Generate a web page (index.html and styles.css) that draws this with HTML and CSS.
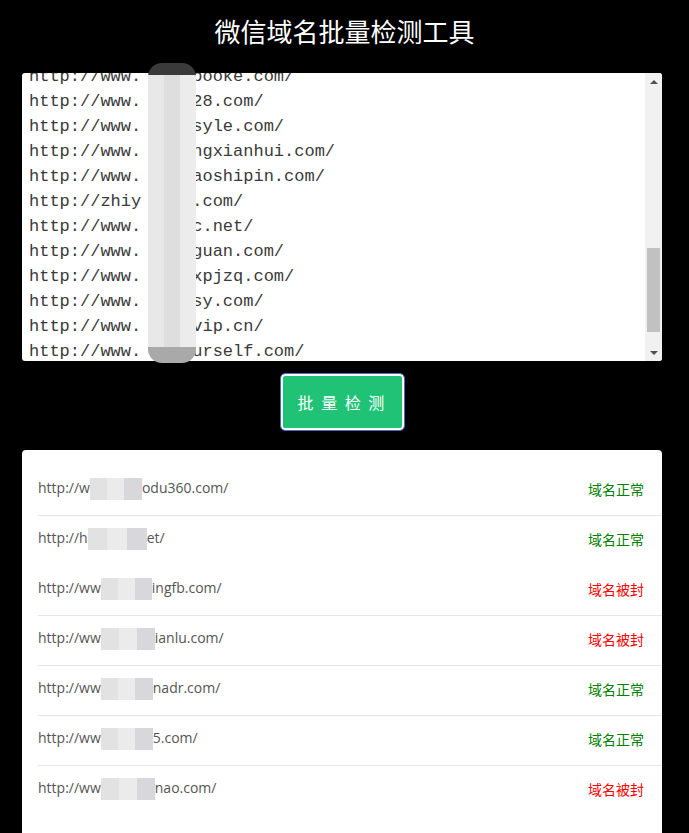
FILE: index.html
```html
<!DOCTYPE html>
<html lang="zh-CN">
<head>
    <meta charset="UTF-8">
    <title>微信域名批量检测工具</title>
    <link rel="stylesheet" href="styles.css">
</head>
<body>
    <h2 class="title">微信域名批量检测工具</h2>
    <div class="box">
        <textarea class="urls" id="urls" spellcheck="false">http://www.qqzhan.com/
http://www.baiduhao.com/
http://www.tengxun.net/
http://www.kuaikan.com/
http://www.dianying.com/
http://www.youxiwang.cn/
http://www.xinwen.com/
http://www.mianfei.com/
http://www.shipinba.com/
http://www.tupian8.com/
http://www.wenzhang.com/
http://www.xiaoshuo.com/
http://www.gushici.cn/
http://www.jiaoyu.com/
http://www.lvyou.com/
http://www.meishi.com/
http://www.jiankang.com/
http://www.caijing.com/
http://www.tiyu88.com/
http://www.keji.com/
http://www.wangzhi.com/
http://www. abcdbooke.com/
http://www. abcd28.com/
http://www. abcdsyle.com/
http://www. abcdngxianhui.com/
http://www. abcdaoshipin.com/
http://zhiy abcd.com/
http://www. abcdc.net/
http://www. abcdguan.com/
http://www. abcdxpjzq.com/
http://www. abcdsy.com/
http://www. abcdvip.cn/
http://www. abcdurself.com/
http://www.zhanzhang.com/</textarea>
        <div class="mosaic"></div>
        <div class="scrollbar">
            <div class="arrow up"></div>
            <div class="track"><div class="thumb"></div></div>
            <div class="arrow down"></div>
        </div>
    </div>
    <div class="actions">
        <button class="btn" type="button">批 量 检 测</button>
    </div>
    <div class="result">
        <div class="row"><span class="url">http://w<span class="mask m1"></span>odu360.com/</span><span class="ok">域名正常</span></div>
        <div class="row nb"><span class="url">http://h<span class="mask m2"></span>et/</span><span class="ok">域名正常</span></div>
        <div class="row"><span class="url">http://ww<span class="mask m3"></span>ingfb.com/</span><span class="bad">域名被封</span></div>
        <div class="row"><span class="url">http://ww<span class="mask m4"></span>ianlu.com/</span><span class="bad">域名被封</span></div>
        <div class="row"><span class="url">http://ww<span class="mask m5"></span>nadr.com/</span><span class="ok">域名正常</span></div>
        <div class="row"><span class="url">http://ww<span class="mask m5"></span>5.com/</span><span class="ok">域名正常</span></div>
        <div class="row nb"><span class="url">http://ww<span class="mask m6"></span>nao.com/</span><span class="bad">域名被封</span></div>
    </div>
    <script>
        var ta = document.getElementById('urls');
        ta.scrollTop = 540;
    </script>
</body>
</html>
```
FILE: styles.css
```css
body {
    margin: 0;
    background: #000;
    font-family: "Noto Sans CJK SC", "Noto Sans", sans-serif;
}
.title {
    margin: 0;
    padding: 12px 0 19px;
    text-align: center;
    color: #fff;
    font-size: 26px;
    font-weight: normal;
    line-height: 38px;
}
.box {
    position: relative;
    margin: 4px 27px 0 22px;
}
.urls {
    display: block;
    box-sizing: border-box;
    width: 100%;
    height: 288px;
    margin: 0;
    padding: 6px 24px 6px 7px;
    border: 0;
    border-radius: 3px;
    resize: none;
    outline: none;
    background: #fff;
    color: #3a3a3a;
    font-family: "Liberation Mono", monospace;
    font-size: 17px;
    line-height: 25px;
    white-space: pre;
    overflow: hidden;
}
.scrollbar {
    position: absolute;
    top: 0;
    right: 0;
    bottom: 0;
    width: 17px;
    display: flex;
    flex-direction: column;
    background: #f1f1f1;
    border-radius: 0 3px 3px 0;
}
.arrow {
    height: 17px;
    display: flex;
    align-items: center;
    justify-content: center;
}
.arrow::after {
    content: "";
    border-left: 4px solid transparent;
    border-right: 4px solid transparent;
}
.arrow.up::after {
    border-bottom: 4px solid #505050;
}
.arrow.down::after {
    border-top: 4px solid #505050;
}
.track {
    flex: 1;
    padding: 0 2px;
}
.thumb {
    height: 84px;
    margin-top: 158px;
    background: #c1c1c1;
}
.mosaic {
    position: absolute;
    left: 126px;
    top: -10px;
    width: 48px;
    height: 300px;
    border-radius: 14px;
    background:
        linear-gradient(to bottom, #3a3a3a 0, #3a3a3a 12px, transparent 12px, transparent 284px, #a9a9a9 284px),
        linear-gradient(to right, #e8e8e8 0, #e8e8e8 16px, #dedede 16px, #dedede 32px, #ececec 32px);
}
.actions {
    margin: 0 27px 0 22px;
    padding: 13px 0 20px;
    text-align: center;
}
.btn {
    width: 123px;
    height: 56px;
    border: 2px solid #fff;
    border-radius: 4px;
    outline: 1px solid #4a6cbc;
    background: #20c376;
    color: #fff;
    font-family: "Noto Sans CJK SC", sans-serif;
    font-size: 16px;
    letter-spacing: 2px;
}
.result {
    margin: 0 27px 0 22px;
    padding: 16px 0 40px;
    background: #fff;
    border-radius: 4px 4px 0 0;
}
.row {
    display: flex;
    justify-content: space-between;
    align-items: center;
    height: 49px;
    margin-left: 16px;
    padding-right: 18px;
    border-bottom: 1px solid #e6e6e6;
}
.row.nb {
    border-bottom-color: transparent;
}
.url {
    color: #555;
    font-size: 14px;
    font-family: "Open Sans", "Noto Sans CJK SC", sans-serif;
    margin-top: -3px;
}
.mask {
    display: inline-block;
    vertical-align: middle;
    height: 22px;
    background: linear-gradient(to right, #e2e2e2 0, #e2e2e2 33%, #ebebeb 33%, #ebebeb 66%, #d8d8dc 66%);
}
.m1 { width: 52px; }
.m2 { width: 59px; }
.m3 { width: 51px; }
.m4 { width: 54px; }
.m5 { width: 52px; }
.m6 { width: 54px; }
.ok, .bad {
    font-size: 14px;
    margin-top: -3px;
}
.ok {
    color: #008000;
}
.bad {
    color: #f00;
}
```
